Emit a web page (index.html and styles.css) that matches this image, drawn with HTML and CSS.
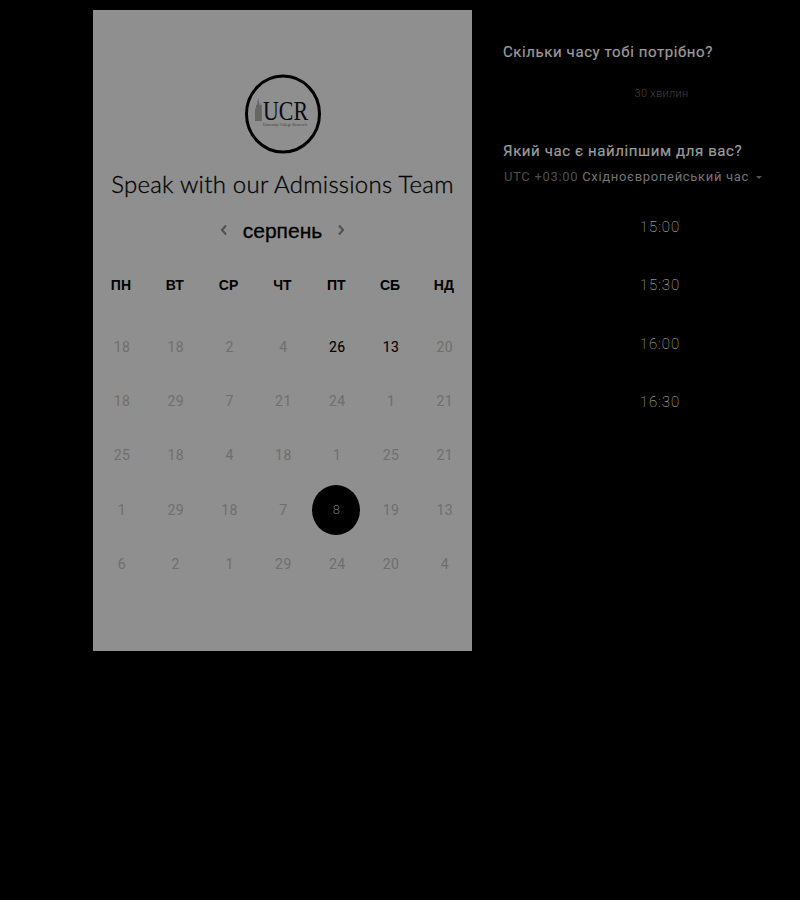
FILE: index.html
```html
<!DOCTYPE html>
<html lang="uk">
<head>
<meta charset="utf-8">
<title>Speak with our Admissions Team</title>
<link rel="stylesheet" href="styles.css">
</head>
<body>
<main class="page">
  <section class="calendar">
    <div class="logo">
      <svg width="80" height="80" viewBox="0 0 80 80" aria-hidden="true">
        <ellipse cx="40" cy="40" rx="36.5" ry="38" fill="none" stroke="#000" stroke-width="3"/>
        <path d="M12 47V35l1-1v-3l1 0 .7-4 .6-3 .6 3 .6 4h.9l.2-3 .4 3h.800v16z" fill="#666"/>
        <text x="20" y="46" class="logo-mark" textLength="45" lengthAdjust="spacingAndGlyphs">UCR</text>
        <text x="42" y="51.500" class="logo-sub" textLength="44" lengthAdjust="spacingAndGlyphs">University College Roosevelt</text>
      </svg>
    </div>
    <h1 class="title">Speak with our Admissions Team</h1>
    <div class="month">
      <svg class="chevron" width="10" height="12" viewBox="0 0 10 12" aria-hidden="true"><path d="M7 1.500 3 6l4 4.500" fill="none" stroke="#505050" stroke-width="2"/></svg>
      <span class="month-name">серпень</span>
      <svg class="chevron" width="10" height="12" viewBox="0 0 10 12" aria-hidden="true"><path d="M3 1.500 7 6l-4 4.500" fill="none" stroke="#505050" stroke-width="2"/></svg>
    </div>
    <div class="weekdays">
      <span>ПН</span><span>ВТ</span><span>СР</span><span>ЧТ</span><span>ПТ</span><span>СБ</span><span>НД</span>
    </div>
    <div class="days">
      <span>18</span><span>18</span><span>2</span><span>4</span><span class="on">26</span><span class="on">13</span><span>20</span>
      <span>18</span><span>29</span><span>7</span><span>21</span><span>24</span><span>1</span><span>21</span>
      <span>25</span><span>18</span><span>4</span><span>18</span><span>1</span><span>25</span><span>21</span>
      <span>1</span><span>29</span><span>18</span><span>7</span><span class="picked">8</span><span>19</span><span>13</span>
      <span>6</span><span>2</span><span>1</span><span>29</span><span>24</span><span>20</span><span>4</span>
    </div>
  </section>
  <section class="side">
    <h2 class="question">Скільки часу тобі потрібно?</h2>
    <p class="duration">30 хвилин</p>
    <h2 class="question second">Який час є найліпшим для вас?</h2>
    <p class="zone"><span class="utc">UTC +03:00</span> Східноєвропейський час <i class="caret"></i></p>
    <ul class="times">
      <li>15:00</li>
      <li>15:30</li>
      <li>16:00</li>
      <li>16:30</li>
    </ul>
  </section>
</main>
</body>
</html>
```
FILE: styles.css
```css
* { box-sizing: border-box; }
html, body { margin: 0; background: #000; }
body { width: 800px; height: 900px; overflow: hidden; font-family: Roboto, "Liberation Sans", sans-serif; }
.page { display: flex; align-items: flex-start; padding: 10px 0 0 93px; }

.calendar {
  width: 379px; height: 641px; background: #8f8f8f;
  display: flex; flex-direction: column; align-items: center; padding-top: 64px;
}
.logo { height: 80px; }
.logo svg { display: block; }
.logo-mark { font: 27px "Liberation Serif", serif; fill: #0a0a0a; }
.logo-sub { font: 4px "Liberation Serif", serif; fill: #3a3a3a; text-anchor: middle; }
.title {
  margin: 15px 0 0; font: 300 24px/30px Lato, sans-serif; color: #000; -webkit-text-stroke: .3px #000;
  white-space: nowrap; letter-spacing: .24px;
}
.month { display: flex; align-items: center; justify-content: center; gap: 14px; margin-top: 17px; height: 30px; }
.month-name { font: 21px/30px "Liberation Sans", sans-serif; color: #000; -webkit-text-stroke: .3px #000; }
.chevron { display: block; margin-top: -2px; }
.weekdays, .days { display: grid; grid-template-columns: repeat(7, 53.83px); justify-items: center; width: 377px; }
.weekdays {
  margin-top: 30px; font: 700 14px/18px "Liberation Sans", sans-serif; color: #000;
}
.days { margin: 25.700px 0 0 2px; grid-auto-rows: 54.25px; align-items: center; font-size: 14px; letter-spacing: .4px; color: #6e6e6e; }
.days span { display: flex; align-items: center; justify-content: center; width: 48px; height: 48px; }
.days .on { color: #000; -webkit-text-stroke: .1px #000; }
.days .picked { height: 50px; margin-left: -1.500px; background: #000; border-radius: 50%; color: #707070; font-size: 13px; font-weight: 300; }

.side { margin-left: 31px; width: 297px; flex: none; }
.question {
  margin: 0; font: 400 15px/20px Roboto, sans-serif; letter-spacing: .6px; color: #9c9c9c; -webkit-text-stroke: .2px #9c9c9c; white-space: nowrap;
}
.side > .question:first-child { margin-top: 32px; }
.duration {
  margin: 24px 0 0; padding-left: 20px; text-align: center;
  font: 300 11px/16px Roboto, sans-serif; letter-spacing: .3px; color: #444;
}
.second { margin-top: 39px; }
.zone {
  margin: 7px 0 0; font: 400 13px/18px Roboto, sans-serif; letter-spacing: .68px; color: #747474; white-space: nowrap; padding-left: 1px;
}
.utc { color: #4e4e4e; }
.caret {
  display: inline-block; width: 0; height: 0; margin-left: 3px; vertical-align: middle;
  border: 3px solid transparent; border-top-color: #555; border-bottom: 0;
}
.times { list-style: none; margin: 29px 0 0; padding: 0 0 0 17px; }
.times li {
  height: 58.3px; line-height: 24px; text-align: center; font-size: 15px; font-weight: 100; letter-spacing: 1px; color: #d0d0d0;
}
```
